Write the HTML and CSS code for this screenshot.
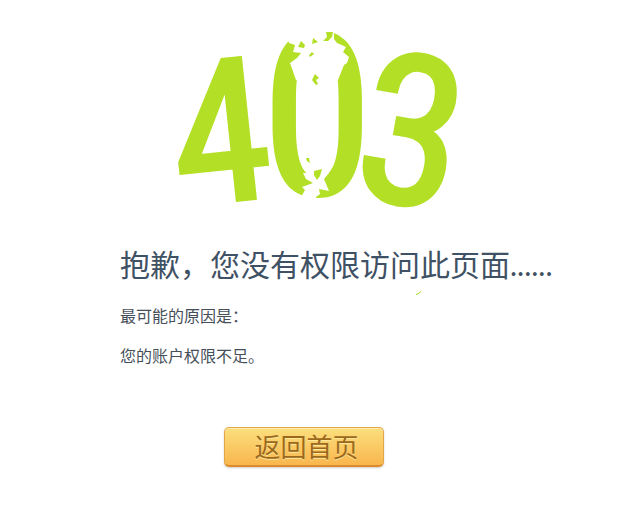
FILE: index.html
```html
<!DOCTYPE html>
<html lang="zh-CN">
<head>
<meta charset="utf-8">
<title>403</title>
<link rel="stylesheet" href="styles.css">
</head>
<body>
<main class="error">
  <svg class="code" viewBox="0 0 300 200" role="img" aria-label="403">
    <g class="digits">
      <text class="four" transform="translate(9 186) rotate(-6)">4</text>
      <text class="zero" x="92" y="174">0</text>
      <text class="three" transform="translate(179 174) rotate(10)">3</text>
    </g>
    <g class="cracks">
      <path d="M114 0V20L118 20 119 23 125 25 123 32 131 33 127 38 120 43 126 60H168L174 45 177 43 179 37 173 32 176 27 167 23 164 19V0Z"/>
      <path d="M133 153L136 159 143 163 132 167 135 170 131 177 134 184H146V177L150 174 149 169 159 171 154 159 159 153Z"/>
    </g>
    <g class="shards">
      <path d="M128 27L131 21 135 25 134 28Z M142 24L143 18 148 22Z M153 21L157 17 156 12 163 12 162 17 158 21Z M139 35L142 32 144 34 140 37Z M142 60L145 54 149 58 146 60 148 64 146 65Z"/>
      <path d="M136 138L139 138 140 143 137 141Z M144 155V151L152 149 150 156 147 160Z"/>
    </g>
  </svg>
  <div class="message">
    <h1 class="title">抱歉，您没有权限访问此页面......</h1>
    <svg class="fleck" viewBox="0 0 6 4" aria-hidden="true"><path d="M0 3.5L2 3 5 .5"/></svg>
    <p class="reason">最可能的原因是：</p>
    <p class="reason">您的账户权限不足。</p>
  </div>
  <a class="home" href="/">返回首页</a>
</main>
</body>
</html>
```
FILE: styles.css
```css
* {
  box-sizing: border-box;
}

body {
  margin: 0;
  background: #fff;
  font-family: "Liberation Sans", "Noto Sans CJK SC", sans-serif;
}

.error {
  display: flex;
  flex-direction: column;
  padding: 20px 28px 48px 120px;
}

.code {
  width: 300px;
  margin-left: 50px;
  overflow: visible;
}

.digits {
  fill: #b3e026;
  stroke: #b3e026;
  stroke-width: 4px;
  font-family: "Roboto Condensed", "Open Sans Condensed", "Liberation Sans Narrow", sans-serif;
}

.four {
  font-size: 198px;
}

.zero {
  font-size: 224px;
}

.three {
  font-size: 208px;
}

.cracks {
  fill: #fff;
}

.shards {
  fill: #b3e026;
}

.message {
  position: relative;
  padding-top: 24px;
}

.title {
  margin: 0 0 21px;
  color: #3f5164;
  font: 400 30px/40px Lato, "Noto Sans CJK SC", sans-serif;
  white-space: nowrap;
}

.fleck {
  position: absolute;
  top: 71px;
  left: 296px;
  width: 6px;
  fill: none;
  stroke: #a5d82a;
}

.reason {
  margin: 0 0 16px;
  color: #464f59;
  font-size: 16px;
  line-height: 24px;
}

.home {
  width: 160px;
  height: 40px;
  margin: 42px 0 0 104px;
  padding: 1px 0 0 5px;
  border: 1px solid #e3a648;
  border-bottom: 2px solid #dc8b2c;
  border-radius: 5px;
  background: linear-gradient(#fbdf7d, #f9b64e);
  box-shadow: inset 0 1px #fdeeb0, 0 1px 2px #0003;
  color: #9c681b;
  font-size: 26px;
  line-height: 38px;
  text-align: center;
  text-decoration: none;
  text-shadow: 0 1px #fde79b;
}
```
